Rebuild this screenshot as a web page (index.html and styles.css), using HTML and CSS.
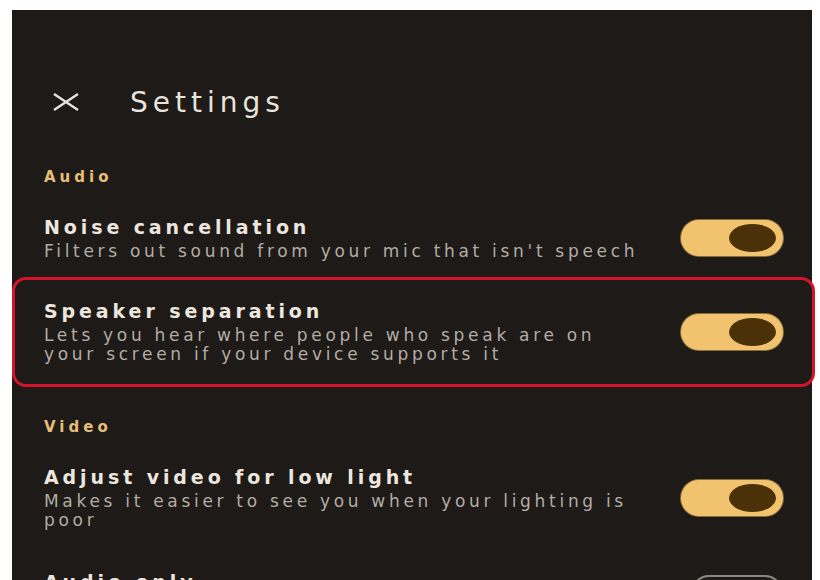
FILE: index.html
```html
<!DOCTYPE html>
<html lang="en">
<head>
  <meta charset="UTF-8" />
  <title>Settings</title>
  <meta name="viewport" content="width=device-width, initial-scale=1.0" />
  <link rel="stylesheet" href="styles.css">
</head>
<body>

  <div class="panel">
    <!-- Header -->
    <div class="header">
      <span class="close">
        <svg width="28" height="18" viewBox="0 0 28 18">
          <path d="M2 1 L26 17 M26 1 L2 17" stroke="#e8e2dc" stroke-width="2.4" fill="none"/>
        </svg>
      </span>
      <h1>Settings</h1>
    </div>

    <div class="section-label">Audio</div>

    <div class="row">
      <div class="text">
        <div class="title">Noise cancellation</div>
        <div class="desc">Filters out sound from your mic that isn't speech</div>
      </div>
      <div class="toggle on"><span class="thumb"></span></div>
    </div>

    <div class="row highlight">
      <div class="text">
        <div class="title">Speaker separation</div>
        <div class="desc">Lets you hear where people who speak are on<br>your screen if your device supports it</div>
      </div>
      <div class="toggle on"><span class="thumb"></span></div>
    </div>

    <div class="section-label video">Video</div>

    <div class="row">
      <div class="text">
        <div class="title">Adjust video for low light</div>
        <div class="desc">Makes it easier to see you when your lighting is<br>poor</div>
      </div>
      <div class="toggle on"><span class="thumb"></span></div>
    </div>

    <div class="row last">
      <div class="text">
        <div class="title">Audio only</div>
      </div>
      <div class="toggle off"><span class="thumb"></span></div>
    </div>
  </div>

</body>
</html>
```

FILE: styles.css
```css
* { box-sizing: border-box; margin: 0; padding: 0; }

html, body {
  height: 580px;
  overflow: hidden;
}

body {
  background: #ffffff;
  font-family: 'DejaVu Sans', 'Open Sans', sans-serif;
  padding: 10px 8px 0 12px;
}

.panel {
  background: #1d1a17;
  height: 640px;
  padding: 72px 29px 0 32px;
  display: flex;
  flex-direction: column;
}

.header {
  display: flex;
  align-items: center;
  height: 40px;
  padding-left: 8px;
  gap: 50px;
}

.close {
  display: flex;
  width: 28px;
}

.header h1 {
  font-size: 28px;
  font-weight: 400;
  letter-spacing: 5px;
  color: #e9e3dc;
}

.section-label {
  margin-top: 45px;
  font-size: 15px;
  font-weight: 700;
  letter-spacing: 4px;
  color: #e6be78;
  line-height: 20px;
}

.section-label.video {
  margin-top: 30px;
}

.row {
  display: flex;
  align-items: center;
  justify-content: space-between;
  margin-top: 28px;
}

.row .text {
  display: flex;
  flex-direction: column;
}

.title {
  font-size: 19px;
  font-weight: 600;
  letter-spacing: 3.9px;
  line-height: 24px;
  color: #ece6df;
}

.desc {
  font-size: 17px;
  letter-spacing: 3.7px;
  line-height: 19px;
  color: #b3aca4;
  margin-top: 3px;
}

.highlight {
  margin: 16px -32px 0 -32px;
  padding: 19px 29px 20px 29px;
  border: 3px solid #d3142c;
  border-radius: 14px;
}

.last {
  margin-top: 40px;
  align-items: flex-start;
}

.toggle {
  width: 102px;
  height: 36px;
  border-radius: 18px;
  display: flex;
  align-items: center;
  justify-content: flex-end;
  padding-right: 7px;
  flex-shrink: 0;
}

.toggle.on {
  background: #f1c36f;
  box-shadow: 0 0 0 1px #8a6c3a;
}

.toggle .thumb {
  width: 47px;
  height: 28px;
  border-radius: 50%;
}

.toggle.on .thumb {
  background: #4b3108;
}

.toggle.off {
  width: 92px;
  background: transparent;
  border: 2px solid #8e877f;
  justify-content: flex-start;
  margin-top: 5px;
}

.toggle.off .thumb {
  background: #8e877f;
  width: 30px;
  height: 20px;
  margin-left: 6px;
}
```
